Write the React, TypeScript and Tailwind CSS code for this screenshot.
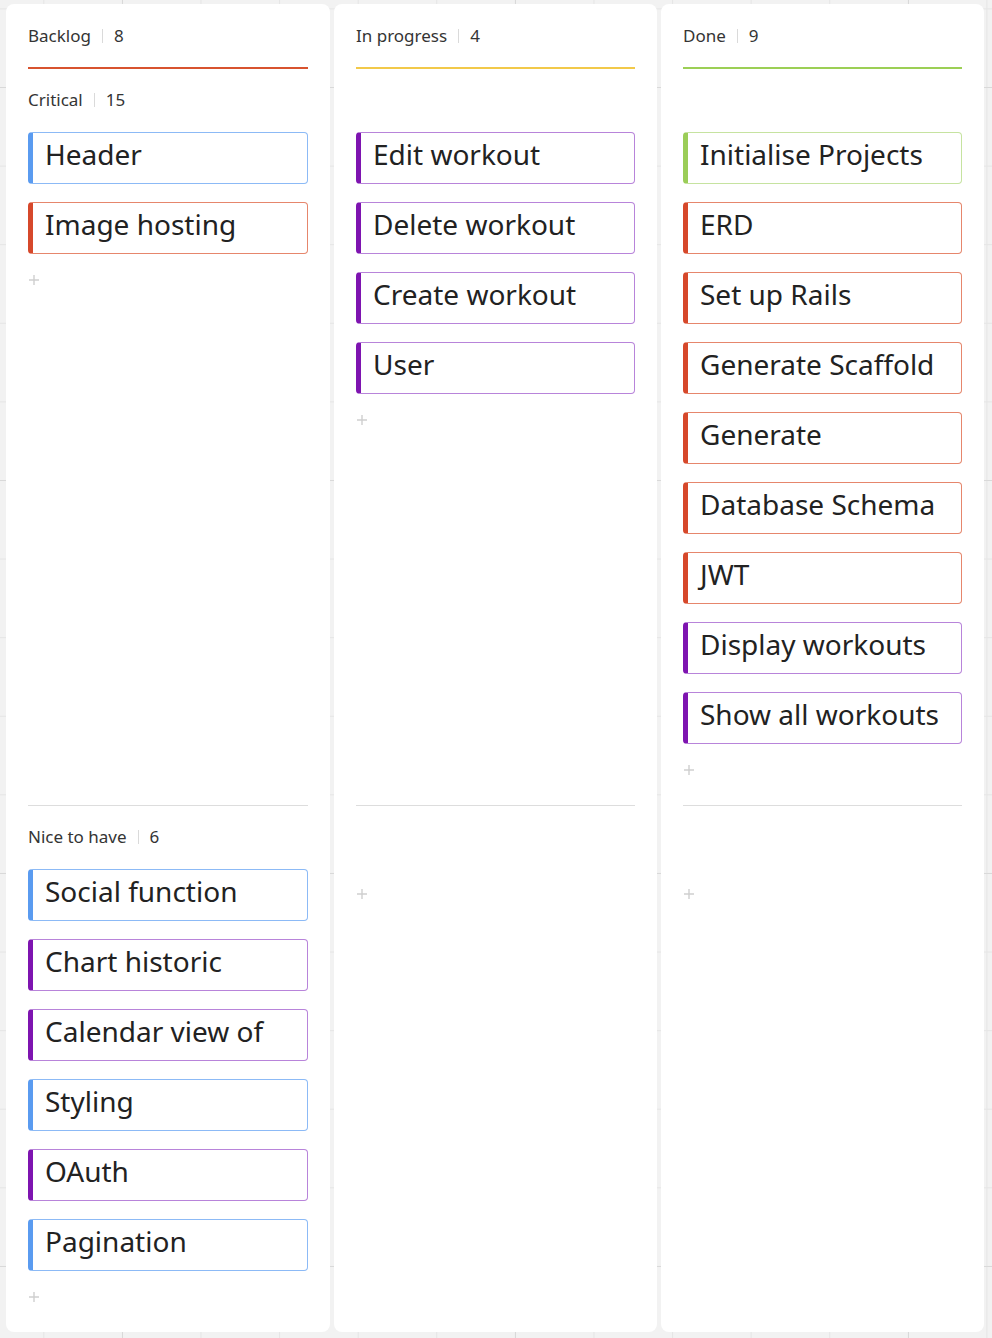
import React from "react";

type Tone = "blue" | "red" | "purple" | "green";

const toneClass: Record<Tone, string> = {
  blue: "border-[#8cbaf6] border-l-[#5a9bf0]",
  red: "border-[#e6866c] border-l-[#d6482b]",
  purple: "border-[#b884da] border-l-[#7e14b0]",
  green: "border-[#c6e3a0] border-l-[#9bcd58]",
};

type Lane = { label?: string; count?: number; cards: [string, Tone][] };
type Column = { title: string; count: number; line: string; lanes: Lane[] };

const columns: Column[] = [
  {
    title: "Backlog",
    count: 8,
    line: "bg-[#d8532f]",
    lanes: [
      {
        label: "Critical",
        count: 15,
        cards: [
          ["Header", "blue"],
          ["Image hosting", "red"],
        ],
      },
      {
        label: "Nice to have",
        count: 6,
        cards: [
          ["Social function", "blue"],
          ["Chart historic", "purple"],
          ["Calendar view of", "purple"],
          ["Styling", "blue"],
          ["OAuth", "purple"],
          ["Pagination", "blue"],
        ],
      },
    ],
  },
  {
    title: "In progress",
    count: 4,
    line: "bg-[#f2c94a]",
    lanes: [
      {
        cards: [
          ["Edit workout", "purple"],
          ["Delete workout", "purple"],
          ["Create workout", "purple"],
          ["User", "purple"],
        ],
      },
      { cards: [] },
    ],
  },
  {
    title: "Done",
    count: 9,
    line: "bg-[#9ccf55]",
    lanes: [
      {
        cards: [
          ["Initialise Projects", "green"],
          ["ERD", "red"],
          ["Set up Rails", "red"],
          ["Generate Scaffold", "red"],
          ["Generate", "red"],
          ["Database Schema", "red"],
          ["JWT", "red"],
          ["Display workouts", "purple"],
          ["Show all workouts", "purple"],
        ],
      },
      { cards: [] },
    ],
  },
];

function Plus() {
  return (
    <svg width="12" height="12" viewBox="0 0 12 12" className="block">
      <path d="M6 1v10M1 6h10" stroke="#cfcfcf" strokeWidth="1.4" fill="none" />
    </svg>
  );
}

function Label({ text, count }: { text: string; count: number }) {
  return (
    <div className="flex h-[24px] items-center text-[17px] leading-[24px] text-[#343434]">
      <span>{text}</span>
      <span className="mx-[11px] h-[14px] w-px bg-[#dadada]" />
      <span>{count}</span>
    </div>
  );
}

function Card({ text, tone }: { text: string; tone: Tone }) {
  return (
    <div
      className={`h-[52px] whitespace-nowrap overflow-hidden rounded-[4px] border border-l-[5px] bg-white pl-[12px] pt-[3px] text-[28px] leading-[36px] text-[#222222] ${toneClass[tone]}`}
    >
      {text}
    </div>
  );
}

export default function App() {
  return (
    <div className="min-h-screen w-full bg-[#f2f2f2] bg-[linear-gradient(to_right,#d9d9d9_1px,transparent_1px),linear-gradient(to_bottom,#d9d9d9_1px,transparent_1px),linear-gradient(to_right,#e5e5e5_1px,transparent_1px),linear-gradient(to_bottom,#e5e5e5_1px,transparent_1px)] bg-size-[393px_393px,393px_393px,78.6px_78.6px,78.6px_78.6px] bg-position-[122px_480px,122px_480px,43.3px_87px,43.3px_87px] pl-[6px] pt-[4px] font-['Noto_Sans',sans-serif]">
      <div className="grid grid-cols-[324px_323px_323px] gap-x-[4px]">
        {columns.map((col) => (
          <div key={col.title} className="rounded-t-[8px] bg-white px-[22px] pt-[20px]">
            <Label text={col.title} count={col.count} />
            <div className={`mt-[19px] h-[2px] ${col.line}`} />
          </div>
        ))}
        {[0, 1].map((li) =>
          columns.map((col) => {
            const lane = col.lanes[li];
            const last = li === 1;
            return (
              <div
                key={col.title + li}
                className={`flex flex-col bg-white px-[22px] ${last ? "rounded-b-[8px]" : ""}`}
              >
                <div
                  className={`flex-1 pt-[19px] pb-[29px] ${last ? "" : "border-b border-[#dddddd]"}`}
                >
                  {lane.label ? (
                    <Label text={lane.label} count={lane.count ?? 0} />
                  ) : (
                    <div className="h-[24px]" />
                  )}
                  {lane.cards.length > 0 ? (
                    <div className="mt-[20px] flex flex-col gap-[18px]">
                      {lane.cards.map(([t, tone]) => (
                        <Card key={t} text={t} tone={tone} />
                      ))}
                    </div>
                  ) : null}
                  <div className={lane.cards.length > 0 ? "mt-[20px]" : "mt-[39px]"}>
                    <Plus />
                  </div>
                </div>
              </div>
            );
          })
        )}
      </div>
    </div>
  );
}
